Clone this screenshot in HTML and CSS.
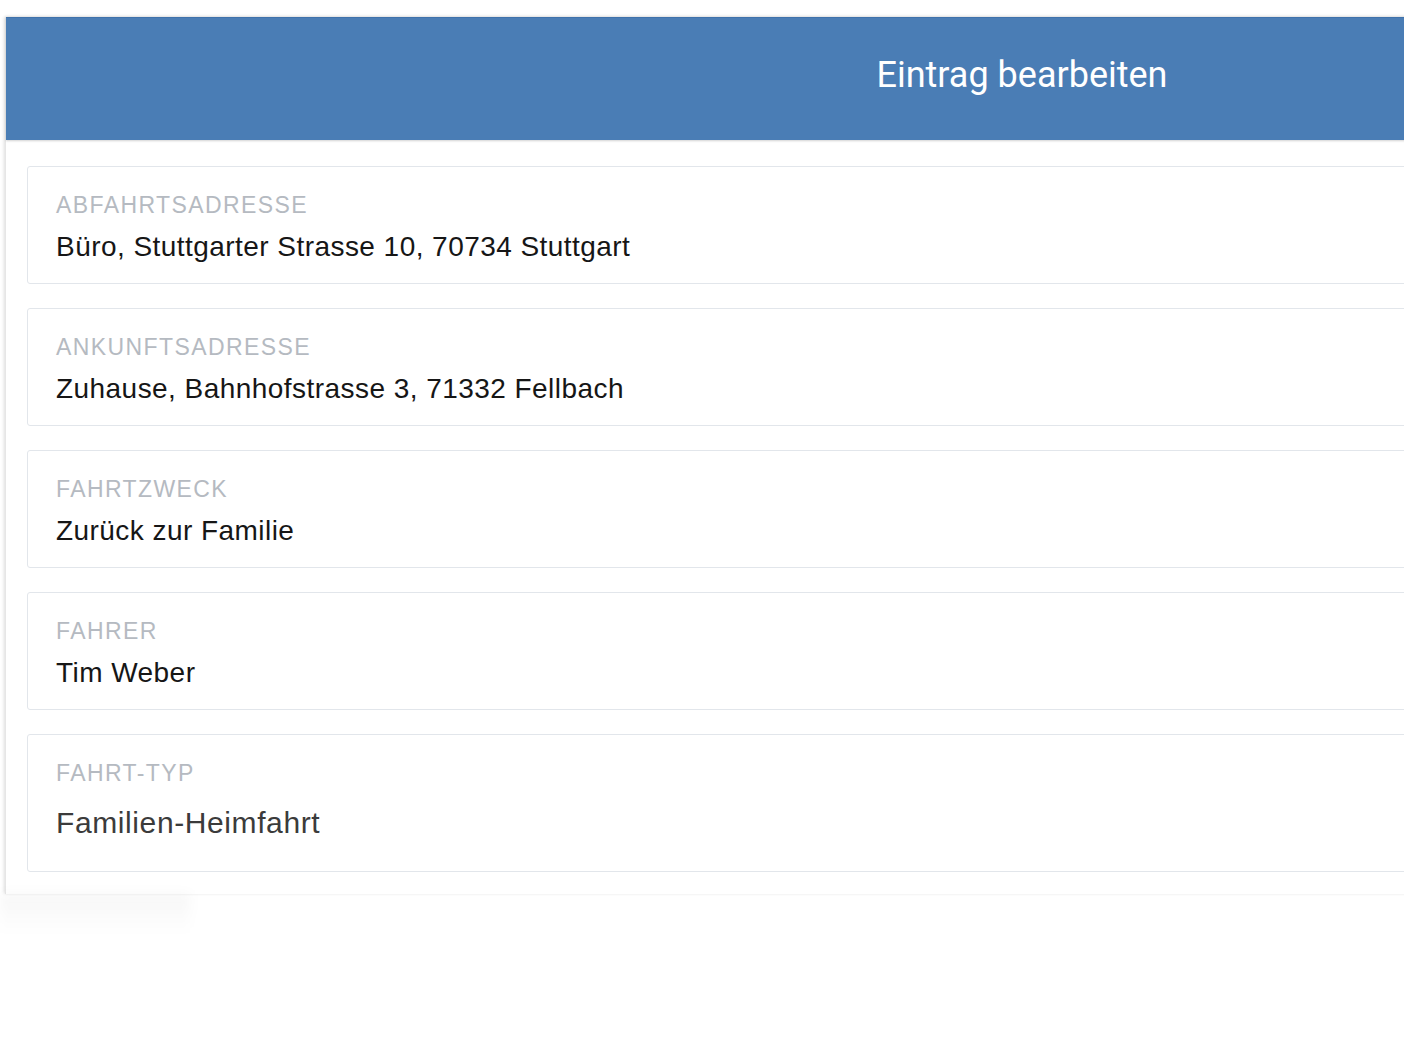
FILE: index.html
```html
<!DOCTYPE html>
<html lang="de">
<head>
  <meta charset="UTF-8" />
  <meta name="viewport" content="width=device-width, initial-scale=1.0"/>
  <title>Eintrag bearbeiten</title>
  <link rel="stylesheet" href="styles.css">
</head>
<body>
  <div class="panel">
    <header class="panel-header">
      <h1>Eintrag bearbeiten</h1>
    </header>

    <div class="fields">
      <div class="field">
        <div class="field-label">Abfahrtsadresse</div>
        <div class="field-value">Büro, Stuttgarter Strasse 10, 70734 Stuttgart</div>
      </div>

      <div class="field">
        <div class="field-label">Ankunftsadresse</div>
        <div class="field-value">Zuhause, Bahnhofstrasse 3, 71332 Fellbach</div>
      </div>

      <div class="field">
        <div class="field-label">Fahrtzweck</div>
        <div class="field-value">Zurück zur Familie</div>
      </div>

      <div class="field">
        <div class="field-label">Fahrer</div>
        <div class="field-value">Tim Weber</div>
      </div>

      <div class="field field-large">
        <div class="field-label">Fahrt-Typ</div>
        <div class="field-value">Familien-Heimfahrt</div>
      </div>
    </div>
  </div>
</body>
</html>
```

FILE: styles.css
```css
body {
  font-family: 'Liberation Sans', Arial, sans-serif;
  margin: 0;
  padding: 0;
  background-color: #fff;
  overflow: hidden;
  height: 100vh;
}

.panel {
  position: relative;
  margin: 17px 0 0 5px;
  width: 2032px;
  background: #fff;
  border-left: 1px solid #e6e6e6;
  box-shadow: -2px 0 3px rgba(0, 0, 0, 0.06), 0 -1px 3px rgba(0, 0, 0, 0.1);
}

/* soft fade below the panel, only visible at the left */
.panel::after {
  content: "";
  position: absolute;
  left: -6px;
  top: 100%;
  width: 190px;
  height: 40px;
  background: linear-gradient(to bottom, rgba(0, 0, 0, 0.035), rgba(0, 0, 0, 0));
  filter: blur(6px);
}

.panel-header {
  background-color: #4a7db5;
  height: 123px;
  box-sizing: border-box;
  padding-top: 37px;
  text-align: center;
  border-top: 1px solid #3f72ab;
  box-shadow: 0 1px 2px rgba(0, 0, 0, 0.18);
}

.panel-header h1 {
  margin: 0;
  font-family: Roboto, 'Liberation Sans', sans-serif;
  font-weight: 400;
  font-size: 36px;
  line-height: 42px;
  color: #fff;
  position: relative;
  top: -1px;
}

.fields {
  display: flex;
  flex-direction: column;
  gap: 24px;
  padding: 26px 0 22px 21px;
}

.field {
  border: 1px solid #e2e6eb;
  border-radius: 3px;
  padding: 25px 28px 20px;
}

.field-label {
  font-size: 23px;
  line-height: 26px;
  letter-spacing: 1.4px;
  text-transform: uppercase;
  color: #b5bac1;
}

.field-value {
  margin-top: 13px;
  font-size: 28px;
  line-height: 32px;
  letter-spacing: 0.45px;
  color: #161616;
}

.field-large {
  padding-bottom: 30px;
}

.field-large .field-value {
  margin-top: 19px;
  font-size: 30px;
  line-height: 36px;
  letter-spacing: 0.6px;
  color: #3b3b3b;
}
```
